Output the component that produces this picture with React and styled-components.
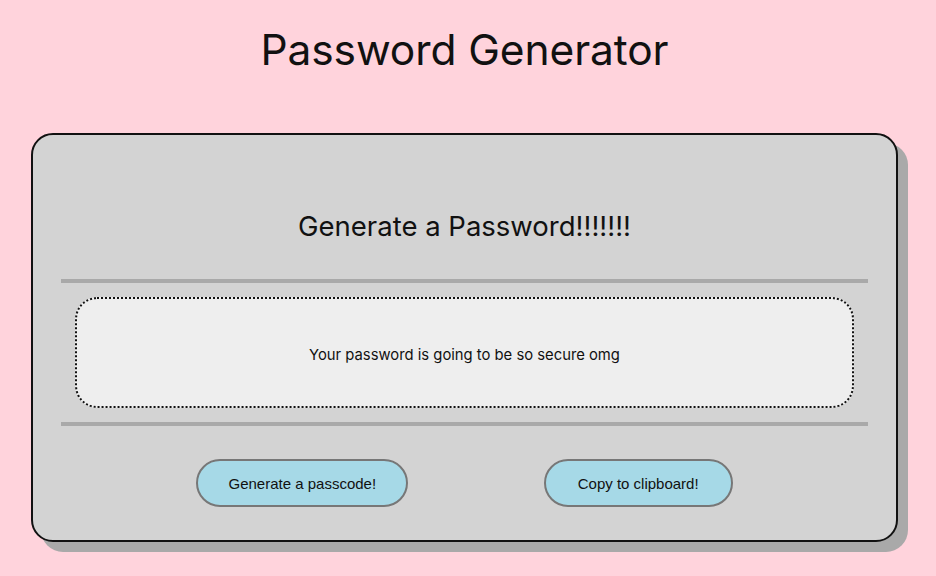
import React from "react";
import styled, { createGlobalStyle } from "styled-components";

const Global = createGlobalStyle`
  html, body { margin: 0; padding: 0; }
  body {
    background: #ffd3dc;
    font-family: Inter, "Noto Sans", sans-serif;
    color: #111;
    width: 936px;
    height: 576px;
    overflow: hidden;
  }
`;

const Page = styled.main`
  display: flex;
  flex-direction: column;
  padding: 0 38px 0 31px;
`;

const Title = styled.h1`
  margin: 24px 0 0;
  height: 52px;
  text-align: center;
  font-size: 42.5px;
  font-weight: 400;
  line-height: 52px;
  letter-spacing: -0.1px;
`;

const Card = styled.section`
  margin-top: 57px;
  height: 409px;
  box-sizing: border-box;
  background: #d3d3d3;
  border: 2px solid #111;
  border-radius: 22px;
  box-shadow: 10px 10px 0 #a9a9a9;
  padding: 0 28px;
  display: flex;
  flex-direction: column;
`;

const Heading = styled.h2`
  margin: 73px 0 35px;
  height: 36px;
  line-height: 36px;
  text-align: center;
  font-size: 27.5px;
  font-weight: 400;
`;

const Rule = styled.hr`
  margin: 0;
  border: 0;
  height: 4px;
  background: #a9a9a9;
`;

const Output = styled.div`
  margin: 14px 14px;
  height: 111px;
  box-sizing: border-box;
  border: 2px dotted #111;
  border-radius: 22px;
  background: #eeeeee;
  display: flex;
  align-items: center;
  justify-content: center;
  font-size: 14.8px;
  padding-top: 4px;
`;

const Actions = styled.div`
  margin-top: 33px;
  display: flex;
  justify-content: space-evenly;
`;

const Button = styled.button`
  height: 48px;
  width: ${(p) => p.$w}px;
  box-sizing: border-box;
  border: 2px solid #777;
  border-radius: 24px;
  background: #a6d9e7;
  font-family: "Liberation Sans", Arial, sans-serif;
  font-size: 15px;
  color: #111;
  padding: 0;
`;

export default function App() {
  return (
    <>
      <Global />
      <Page>
        <Title>Password Generator</Title>
        <Card>
          <Heading>Generate a Password!!!!!!!</Heading>
          <Rule />
          <Output>Your password is going to be so secure omg</Output>
          <Rule />
          <Actions>
            <Button $w={212}>Generate a passcode!</Button>
            <Button $w={189}>Copy to clipboard!</Button>
          </Actions>
        </Card>
      </Page>
    </>
  );
}
